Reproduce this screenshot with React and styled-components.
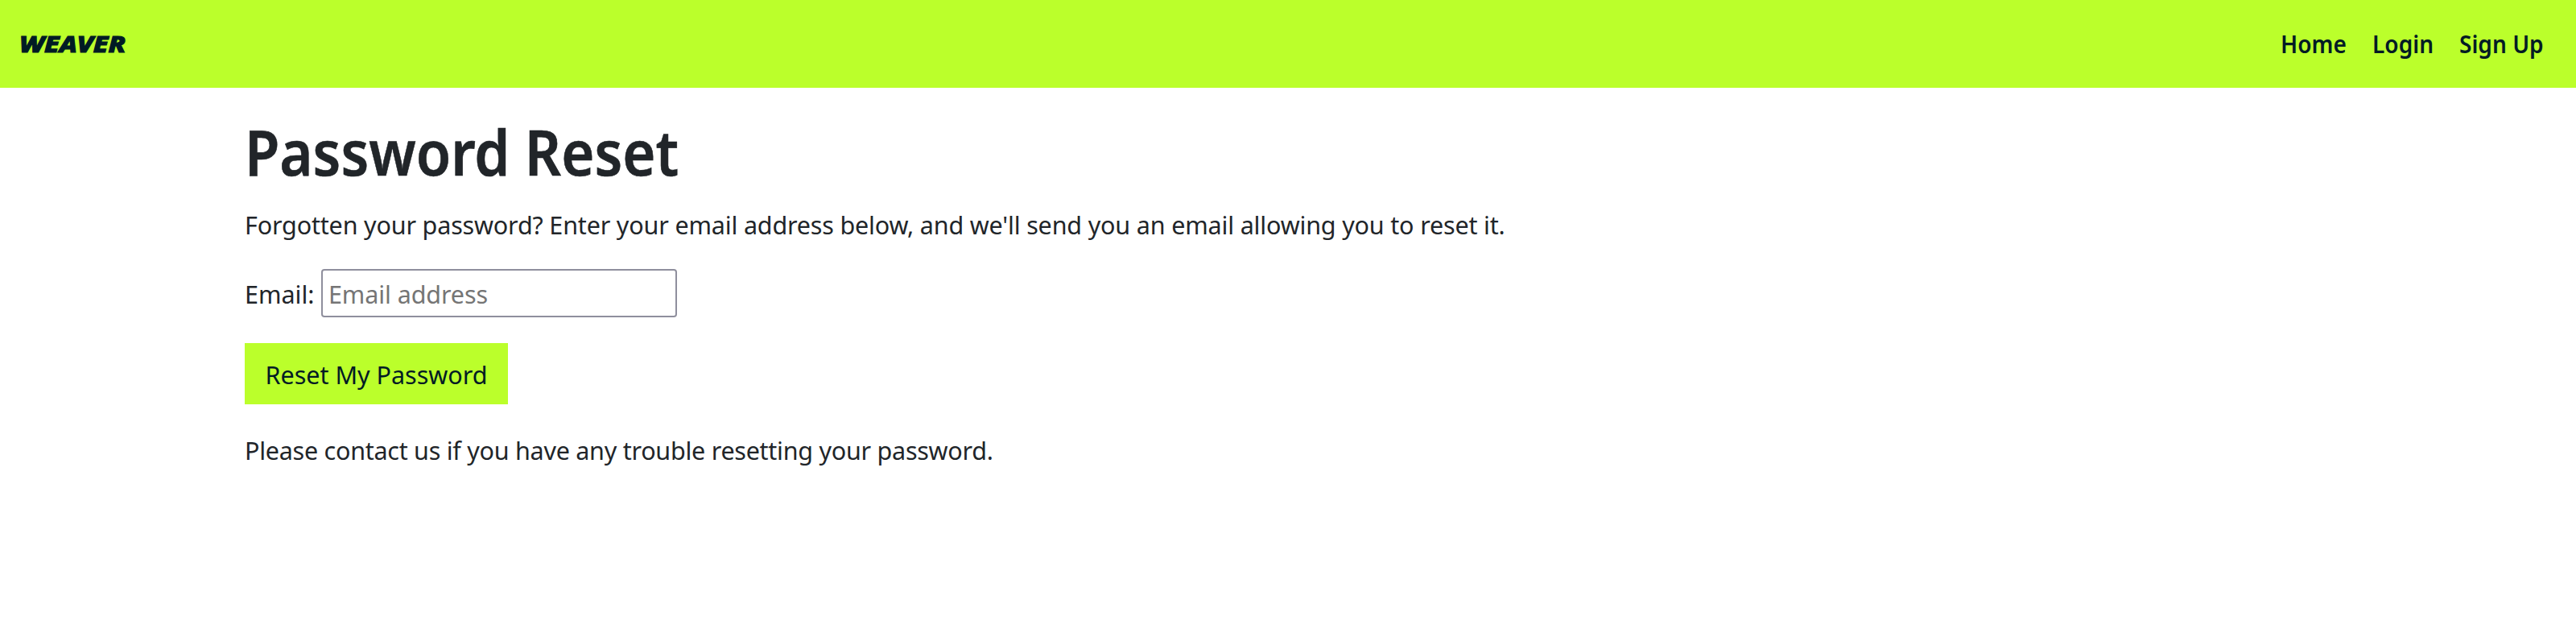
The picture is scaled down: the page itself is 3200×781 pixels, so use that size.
import React from 'react';
import styled, { createGlobalStyle } from 'styled-components';

const LIME = '#bbff2b';
const NAVY = '#001b24';
const INK = '#212529';

const GlobalStyle = createGlobalStyle`
  * { box-sizing: border-box; }
  body {
    margin: 0;
    background: #fff;
    color: ${INK};
    font-family: "Noto Sans", sans-serif;
    font-size: 30.5px;
    line-height: 48px;
  }
`;

const Navbar = styled.header`
  display: flex;
  align-items: center;
  justify-content: space-between;
  height: 109px;
  padding: 0 40px 2px 24px;
  background: ${LIME};
  color: ${NAVY};
`;

const Brand = styled.a`
  color: ${NAVY};
  font-size: 29px;
  font-weight: 800;
  font-style: italic;
  -webkit-text-stroke: 1.2px ${NAVY};
  stroke-linejoin: round;
  text-decoration: none;
  transform: scaleX(1.17);
  transform-origin: left;
`;

const NavLinks = styled.nav`
  display: flex;
  gap: 32px;
`;

const NavLink = styled.a`
  width: ${(p) => p.$width}px;
  white-space: nowrap;
  font-size: 30.5px;
  font-weight: 600;
  color: ${NAVY};
  text-decoration: none;
  transform: scaleX(0.92);
  transform-origin: left;
`;

const Container = styled.main`
  padding: 31px 304px 0;
`;

const Title = styled.h1`
  margin: 0 0 19px;
  font-size: 78px;
  font-weight: 600;
  line-height: 96px;
  -webkit-text-stroke: 0.6px ${INK};
  transform: scaleX(0.904);
  transform-origin: left;
`;

const Paragraph = styled.p`
  margin: 0;
  letter-spacing: ${(p) => p.$tracking}px;
`;

const Form = styled.form`
  display: flex;
  flex-direction: column;
  align-items: flex-start;
  gap: 32px;
  margin: 31px 0 33px;
`;

const Field = styled.label`
  display: flex;
  align-items: center;
  gap: 8px;
`;

const FieldName = styled.span`
  width: 87px;
  padding-top: 2px;
  white-space: nowrap;
`;

const EmailInput = styled.input`
  width: 442px;
  height: 60px;
  padding: 2px 7px 0;
  border: 2px solid #8f8f9d;
  border-radius: 4px;
  background: #fff;
  font: inherit;
  letter-spacing: -0.1px;
  outline: none;

  &::placeholder { color: #757575; opacity: 1; }
`;

const SubmitButton = styled.button`
  width: 327px;
  height: 76px;
  padding: 2px 0 0;
  border: 0;
  background: ${LIME};
  color: ${NAVY};
  font: inherit;
  white-space: nowrap;
`;

export default function App() {
  return (
    <>
      <GlobalStyle />
      <Navbar>
        <Brand>WEAVER</Brand>
        <NavLinks>
          <NavLink $width={82}>Home</NavLink>
          <NavLink $width={76}>Login</NavLink>
          <NavLink $width={105}>Sign Up</NavLink>
        </NavLinks>
      </Navbar>
      <Container>
        <Title>Password Reset</Title>
        <Paragraph $tracking={-0.17}>
          Forgotten your password? Enter your email address below, and we'll send you an email allowing you to reset it.
        </Paragraph>
        <Form onSubmit={(e) => e.preventDefault()}>
          <Field>
            <FieldName>Email:</FieldName>
            <EmailInput type="email" placeholder="Email address" />
          </Field>
          <SubmitButton type="submit">Reset My Password</SubmitButton>
        </Form>
        <Paragraph $tracking={-0.26}>
          Please contact us if you have any trouble resetting your password.
        </Paragraph>
      </Container>
    </>
  );
}
